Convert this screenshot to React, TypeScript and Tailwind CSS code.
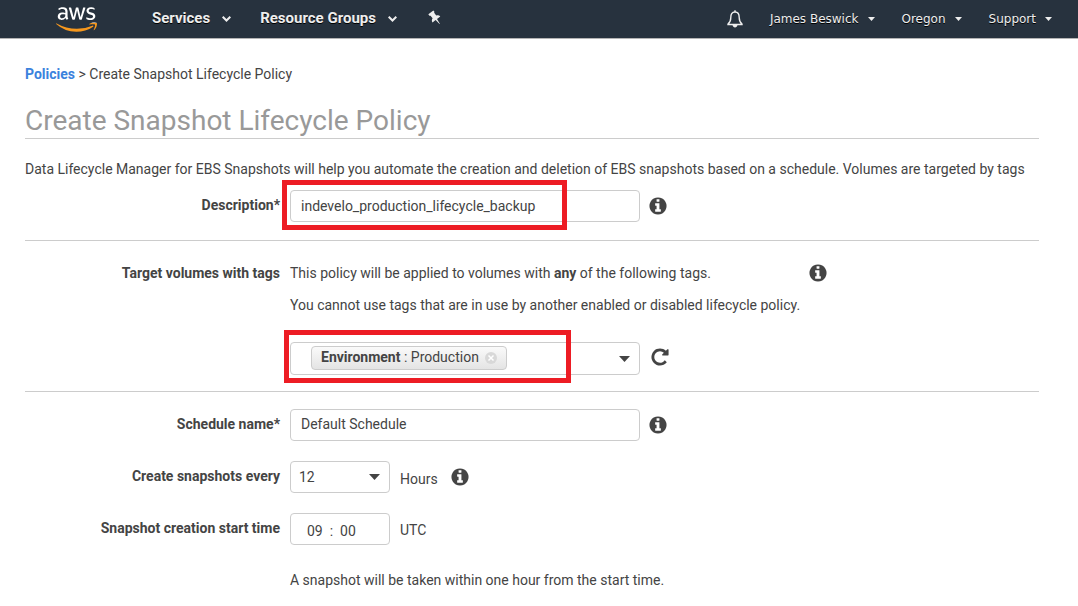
import type { ReactNode } from "react";
import { FaAws } from "react-icons/fa";

function InfoButton({ label }: { label: string }) {
  return (
    <button type="button" aria-label={label} className="flex size-5 shrink-0 text-[#444]">
      <svg viewBox="0 0 1792 1792" className="size-full" fill="currentColor">
        <path d="M1152 1376v-160q0-14-9-23t-23-9h-96v-512q0-14-9-23t-23-9h-320q-14 0-23 9t-9 23v160q0 14 9 23t23 9h96v320h-96q-14 0-23 9t-9 23v160q0 14 9 23t23 9h448q14 0 23-9t9-23zm-128-896v-160q0-14-9-23t-23-9h-192q-14 0-23 9t-9 23v160q0 14 9 23t23 9h192q14 0 23-9t9-23zm640 416q0 209-103 385.500t-279.500 279.500-385.500 103-385.500-103-279.500-279.500-103-385.500 103-385.500 279.500-279.500 385.500-103 385.500 103 279.500 279.500 103 385.500z" />
      </svg>
    </button>
  );
}

function Caret() {
  return (
    <svg viewBox="0 0 11 6" className="h-[6px] w-[11px]" fill="#444">
      <path d="M0 0h11L5.500 6z" />
    </svg>
  );
}

function MainMenu({ children }: { children: ReactNode }) {
  return (
    <button type="button" className="flex items-center gap-3 text-[15px] leading-5 font-bold text-[#eee] text-shadow-[0_1px_0_#000]">
      {children}
      <svg viewBox="0 0 9 6" className="mt-[2px] h-[6px] w-[9px]" fill="none" stroke="#eee" strokeWidth="2">
        <path d="M.7.8l3.800 3.700L8.300.8" />
      </svg>
    </button>
  );
}

function AccountMenu({ children }: { children: ReactNode }) {
  return (
    <button type="button" className="flex items-center gap-[9px] font-['DejaVu_Sans',sans-serif] text-xs leading-5 text-[#eee] text-shadow-[0_1px_0_#000]">
      {children}
      <svg viewBox="0 0 7 4" className="h-[4px] w-[7px]" fill="#eee">
        <path d="M0 0h7L3.500 4z" />
      </svg>
    </button>
  );
}

function Row({ label, htmlFor, children }: { label: string; htmlFor?: string; children: ReactNode }) {
  return (
    <div className="grid grid-cols-[255px_1fr] gap-x-[10px]">
      {htmlFor ? (
        <label htmlFor={htmlFor} className="flex h-[30px] items-center justify-end font-bold">{label}</label>
      ) : (
        <span className="flex h-[30px] items-center justify-end font-bold">{label}</span>
      )}
      {children}
    </div>
  );
}

export default function App() {
  return (
    <div className="min-h-screen bg-white font-['Roboto',sans-serif] text-sm leading-5 text-[#444]">
      <header className="flex h-[39px] items-center border-b border-[#b4b4b4] bg-[#27323e] pr-[26px] pl-14">
        <a href="#home" aria-label="AWS home" className="mr-[55px] flex">
          <svg className="absolute size-0" aria-hidden="true">
            <defs>
              <linearGradient id="aws-fill" gradientUnits="userSpaceOnUse" x1="0" y1="0" x2="0" y2="512">
                <stop offset="0.6" stopColor="#fff" />
                <stop offset="0.6" stopColor="#f7981d" />
              </linearGradient>
            </defs>
          </svg>
          <FaAws className="h-[33px] w-[41px]" fill="url(#aws-fill)" />
        </a>
        <nav className="flex items-center gap-[29px] pb-[2px]">
          <MainMenu>Services</MainMenu>
          <MainMenu>Resource Groups</MainMenu>
          <button type="button" aria-label="Pin shortcuts" className="ml-[2px]">
            <svg viewBox="0 0 16 16" className="size-4" fill="#eee">
              <path transform="rotate(-38 7 8)" d="M4 1h6.400v1.700L9.500 3.400v3.400c1.700.6 2.600 1.700 2.600 3.200H8l-.7 5.500h-.4L6.200 10H2.300c0-1.500.9-2.600 2.600-3.200V3.400L4 2.700z" />
            </svg>
          </button>
        </nav>
        <div className="ml-auto flex items-center gap-[27px]">
          <button type="button" aria-label="Notifications">
            <svg viewBox="0 0 16 18" className="h-[18px] w-4" fill="none" stroke="#eee" strokeWidth="1.400">
              <path d="M8 2C4.800 2 3.800 4.500 3.800 7.500c0 3.500-1 5-2.800 6.500v.5h14V14c-1.800-1.500-2.800-3-2.800-6.500C12.200 4.500 11.200 2 8 2z" />
              <path d="M8 .3V2" />
              <path d="M5.500 14.800h5C10.300 16.700 9.200 17.500 8 17.500s-2.300-.8-2.500-2.700z" fill="#eee" stroke="none" />
            </svg>
          </button>
          <AccountMenu>James Beswick</AccountMenu>
          <AccountMenu>Oregon</AccountMenu>
          <AccountMenu>Support</AccountMenu>
        </div>
      </header>

      <main className="pt-[25px] pr-[39px] pb-4 pl-[25px]">
        <nav aria-label="Breadcrumb">
          <a href="#policies" className="font-bold text-[#3b82dd]">Policies</a> &gt; Create Snapshot Lifecycle Policy
        </nav>
        <h1 className="mt-[18px] border-b border-[#ccc] pt-[2px] text-[28px] leading-[34px] text-[#999]">Create Snapshot Lifecycle Policy</h1>
        <p className="mt-5">
          Data Lifecycle Manager for EBS Snapshots will help you automate the creation and deletion of EBS snapshots based on a schedule. Volumes are targeted by tags
        </p>

        <div className="mt-[11px] border-b border-[#ccc] pb-[18px]">
          <Row label="Description*" htmlFor="description">
            <div className="relative flex items-center gap-2">
              <input id="description" defaultValue="indevelo_production_lifecycle_backup" className="h-8 w-[350px] rounded border border-[#ccc] px-[10px]" />
              <InfoButton label="About the description" />
              <div className="pointer-events-none absolute -top-[10px] -left-2 h-[50px] w-[285px] border-5 border-[#ed1c24]" />
            </div>
          </Row>
        </div>

        <div className="border-b border-[#ccc] pt-[17px] pb-4">
          <Row label="Target volumes with tags">
            <div>
              <div className="flex h-[30px] w-[538px] items-center justify-between">
                <p>This policy will be applied to volumes with <b>any</b> of the following tags.</p>
                <InfoButton label="About target tags" />
              </div>
              <p className="mt-[7px]">You cannot use tags that are in use by another enabled or disabled lifecycle policy.</p>
              <div className="relative mt-[27px] flex items-start gap-[10px]">
                <div className="flex h-[33px] w-[350px] items-start justify-between rounded border border-[#ccc] pt-[3px] pr-[9px] pl-5">
                  <span className="flex h-6 items-center gap-[6px] rounded border border-[#ccc] bg-linear-to-b from-[#fafafa] to-[#e4e4e4] px-[9px]">
                    <span className="pb-[2px]"><b>Environment</b> : Production</span>
                    <button type="button" aria-label="Remove Environment tag">
                      <svg viewBox="0 0 12 12" className="size-3">
                        <circle cx="6" cy="6" r="6" fill="#d8d8d8" />
                        <path d="M3.500 3.500l5 5m0-5l-5 5" stroke="#fff" strokeWidth="1.500" />
                      </svg>
                    </button>
                  </span>
                  <button type="button" aria-label="Show tags" className="flex h-6 items-center pt-[1px]"><Caret /></button>
                </div>
                <button type="button" aria-label="Refresh tags" className="mt-[5px] size-[20px]">
                  <svg viewBox="0 0 1792 1792" className="size-full" fill="#444">
                    <path d="M1664 256v448q0 26-19 45t-45 19h-448q-42 0-59-40-17-39 14-69l138-138q-148-137-349-137-104 0-198.500 40.500t-163.500 109.500-109.500 163.500-40.500 198.500 40.500 198.500 109.500 163.500 163.500 109.500 198.500 40.500q119 0 225-52t179-147q7-10 23-12 15 0 25 9l137 138q9 8 9.500 20.500t-7.500 22.500q-109 132-264 204.500t-327 72.500q-156 0-298-61t-245-164-164-245-61-298 61-298 164-245 245-164 298-61q147 0 284.500 55.500t244.500 156.500l130-129q29-31 70-14 39 17 39 59z" />
                  </svg>
                </button>
                <div className="pointer-events-none absolute -top-3 -left-[6px] h-[53px] w-[287px] border-5 border-[#ed1c24]" />
              </div>
            </div>
          </Row>
        </div>

        <div className="flex flex-col gap-5 pt-[17px]">
          <Row label="Schedule name*" htmlFor="schedule">
            <div className="flex items-center gap-2">
              <input id="schedule" defaultValue="Default Schedule" className="h-8 w-[350px] rounded border border-[#ccc] px-[10px] pb-[2px]" />
              <InfoButton label="About the schedule name" />
            </div>
          </Row>
          <Row label="Create snapshots every" htmlFor="interval">
            <div className="flex h-8 items-center gap-[10px]">
              <div className="grid w-[100px] items-center">
                <select id="interval" defaultValue="12" className="col-start-1 row-start-1 h-8 appearance-none rounded border border-[#ccc] bg-white px-2">
                  <option>12</option>
                  <option>24</option>
                </select>
                <span className="pointer-events-none col-start-1 row-start-1 mr-[10px] justify-self-end"><Caret /></span>
              </div>
              <span className="mr-[2px] pt-1">Hours</span>
              <InfoButton label="About the interval" />
            </div>
          </Row>
          <Row label="Snapshot creation start time" htmlFor="start-time">
            <div>
              <div className="flex items-center gap-[10px]">
                <input id="start-time" defaultValue="09  :  00" className="h-8 w-[100px] rounded border border-[#ccc] px-4 pt-1" />
                <span className="pt-[2px]">UTC</span>
              </div>
              <p className="mt-[25px]">A snapshot will be taken within one hour from the start time.</p>
            </div>
          </Row>
        </div>
      </main>
    </div>
  );
}
